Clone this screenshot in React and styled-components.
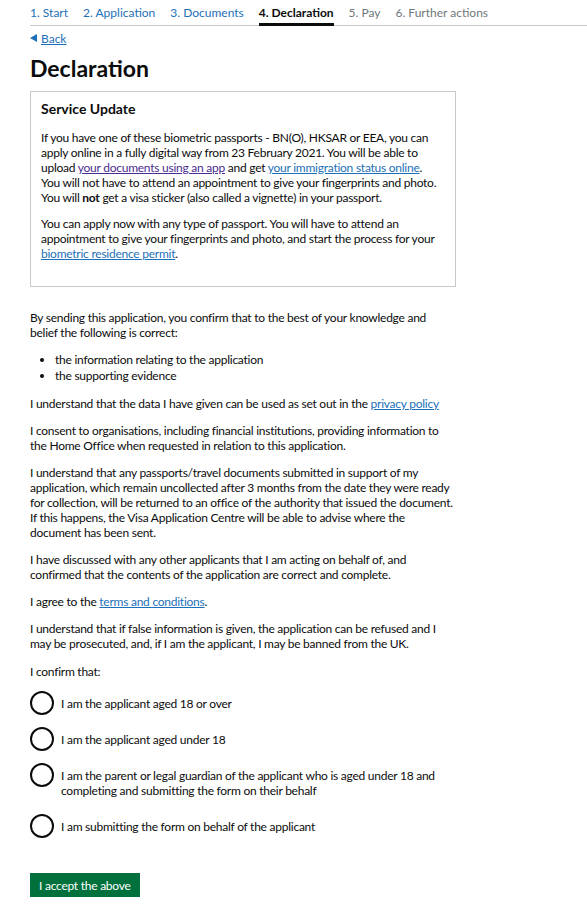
import React from 'react'
import styled, { createGlobalStyle } from 'styled-components'

const GlobalStyle = createGlobalStyle`
  body {
    margin: 0;
    background: #fff;
    color: #0b0c0c;
    font-family: Lato, "Liberation Sans", Arial, sans-serif;
  }
`

const Page = styled('div')`
  padding-left: 30px;
`

const Steps = styled('ol')`
  display: flex;
  gap: 15px;
  list-style: none;
  margin: 0;
  padding: 0;
  height: 25px;
  border-bottom: 1px solid #c8cacc;
`

const Step = styled('li')`
  position: relative;
  font-size: 12px;
  line-height: 26px;
  font-weight: ${props => props.current ? 700 : 400};
  color: ${props => props.current ? '#0b0c0c' : props.done ? '#1d70b8' : '#6f777b'};
  &::after {
    content: '';
    display: ${props => props.current ? 'block' : 'none'};
    position: absolute;
    left: 0;
    right: 0;
    bottom: -1px;
    height: 3px;
    background: #0b0c0c;
  }
`

const Content = styled('div')`
  width: 426px;
  letter-spacing: -0.25px;
`

const BackLink = styled('a')`
  display: inline-flex;
  align-items: center;
  gap: 4px;
  margin-top: 4px;
  font-size: 12px;
  line-height: 15px;
  color: #1d70b8;
  text-decoration: underline;
  letter-spacing: 0;
  &::before {
    content: '';
    width: 0;
    height: 0;
    border-top: 4px solid transparent;
    border-bottom: 4px solid transparent;
    border-right: 7px solid #1d70b8;
  }
`

const Heading = styled('h1')`
  margin: 8px 0 9px;
  font-size: 23px;
  line-height: 28px;
  font-weight: 700;
  letter-spacing: 0;
`

const Notice = styled('div')`
  border: 1px solid #c8cacc;
  padding: 8px 13px 14px 10px;
  margin-bottom: 23px;
`

const NoticeTitle = styled('h2')`
  margin: 0 0 12px;
  font-size: 14px;
  line-height: 18px;
  font-weight: 700;
  letter-spacing: 0;
`

const Text = styled('p')`
  margin: 0 0 12px;
  font-size: 12px;
  line-height: 15px;
  ${Notice} & {
    margin-bottom: 11px;
  }
`

const Lead = styled(Text)`
  margin-top: 13px;
`

const Link = styled('a')`
  color: ${props => props.visited ? '#4c2c92' : '#1d70b8'};
  text-decoration: underline;
`

const Bullets = styled('ul')`
  margin: 0 0 12px;
  padding-left: 25px;
  font-size: 12px;
  line-height: 16px;
`

const Radios = styled('div')`
  display: flex;
  flex-direction: column;
  gap: 12px;
  margin-top: 10px;
`

const RadioRow = styled('label')`
  display: flex;
  align-items: flex-start;
  gap: 7px;
  font-size: 12px;
  line-height: 15px;
  margin-bottom: ${props => props.extra ? '4px' : '0'};
`

const Circle = styled('span')`
  flex: none;
  width: 20px;
  height: 20px;
  border: 2px solid #0b0c0c;
  border-radius: 50%;
`

const RadioText = styled('span')`
  padding-top: 5px;
`

const Button = styled('button')`
  margin-top: 35px;
  padding: 5px 9px 4px;
  border: 0;
  border-radius: 0;
  background: #00703c;
  box-shadow: 0 2px 0 #002d18;
  color: #fff;
  font-family: inherit;
  font-size: 12px;
  line-height: 15px;
  letter-spacing: -0.25px;
`

const steps = [
  { label: '1. Start', done: true },
  { label: '2. Application', done: true },
  { label: '3. Documents', done: true },
  { label: '4. Declaration', current: true },
  { label: '5. Pay' },
  { label: '6. Further actions' }
]

const options = [
  'I am the applicant aged 18 or over',
  'I am the applicant aged under 18',
  'I am the parent or legal guardian of the applicant who is aged under 18 and completing and submitting the form on their behalf',
  'I am submitting the form on behalf of the applicant'
]

export default function App () {
  return (
    <>
      <GlobalStyle />
      <Page>
        <Steps>
          {steps.map(s => (
            <Step key={s.label} done={s.done} current={s.current}>{s.label}</Step>
          ))}
        </Steps>
        <Content>
          <BackLink href='#'>Back</BackLink>
          <Heading>Declaration</Heading>
          <Notice>
            <NoticeTitle>Service Update</NoticeTitle>
            <Text>
              If you have one of these biometric passports - BN(O), HKSAR or EEA, you can apply online in a fully digital way from 23 February 2021. You will be able to upload <Link href='#' visited>your documents using an app</Link> and get <Link href='#'>your immigration status online</Link>. You will not have to attend an appointment to give your fingerprints and photo. You will <b>not</b> get a visa sticker (also called a vignette) in your passport.
            </Text>
            <Text>
              You can apply now with any type of passport. You will have to attend an appointment to give your fingerprints and photo, and start the process for your <Link href='#'>biometric residence permit</Link>.
            </Text>
          </Notice>
          <Text>By sending this application, you confirm that to the best of your knowledge and belief the following is correct:</Text>
          <Bullets>
            <li>the information relating to the application</li>
            <li>the supporting evidence</li>
          </Bullets>
          <Text>I understand that the data I have given can be used as set out in the <Link href='#'>privacy policy</Link></Text>
          <Text>I consent to organisations, including financial institutions, providing information to the Home Office when requested in relation to this application.</Text>
          <Text>I understand that any passports/travel documents submitted in support of my application, which remain uncollected after 3 months from the date they were ready for collection, will be returned to an office of the authority that issued the document. If this happens, the Visa Application Centre will be able to advise where the document has been sent.</Text>
          <Text>I have discussed with any other applicants that I am acting on behalf of, and confirmed that the contents of the application are correct and complete.</Text>
          <Text>I agree to the <Link href='#'>terms and conditions</Link>.</Text>
          <Text>I understand that if false information is given, the application can be refused and I may be prosecuted, and, if I am the applicant, I may be banned from the UK.</Text>
          <Lead>I confirm that:</Lead>
          <Radios>
            {options.map((o, i) => (
              <RadioRow key={o} extra={i === 2}>
                <Circle />
                <RadioText>{o}</RadioText>
              </RadioRow>
            ))}
          </Radios>
          <Button>I accept the above</Button>
        </Content>
      </Page>
    </>
  )
}
